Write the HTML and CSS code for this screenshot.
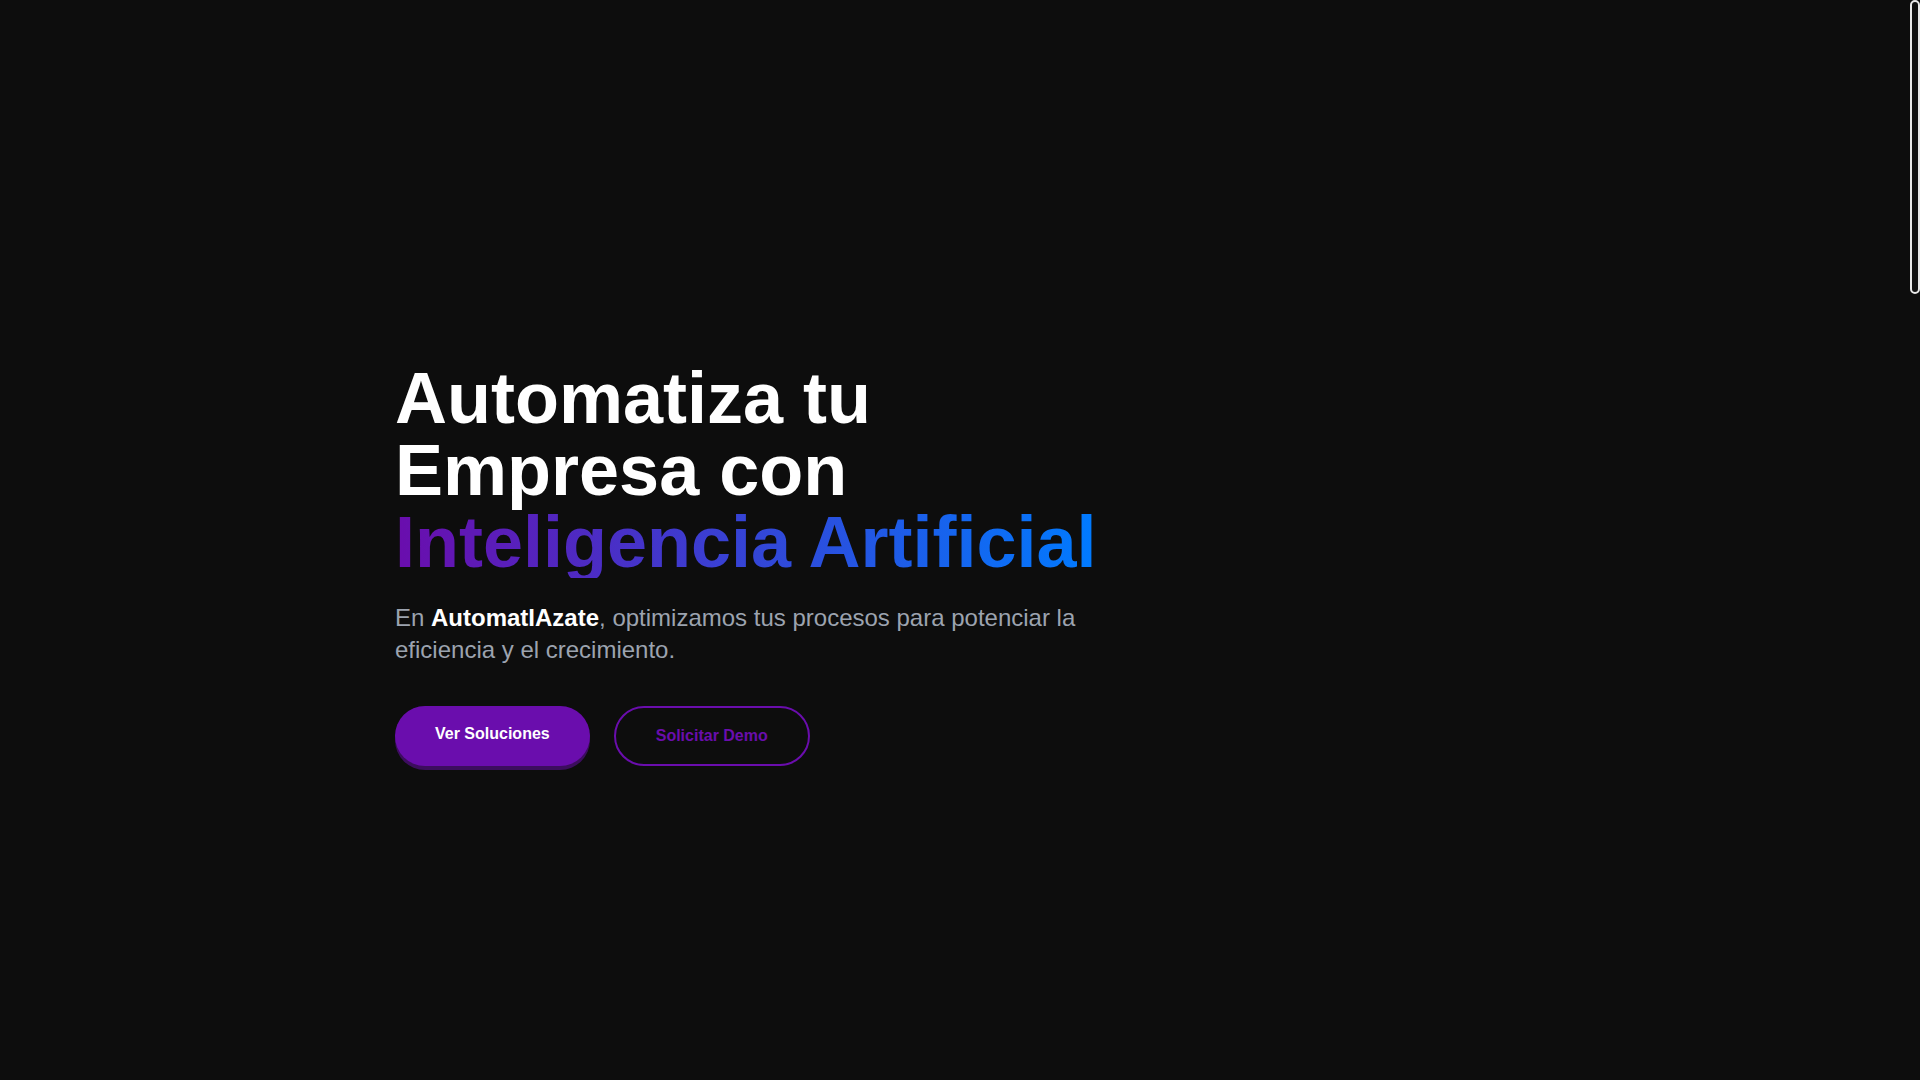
FILE: index.html
```html
<!DOCTYPE html>
<html lang="es">
<head>
<meta charset="utf-8">
<title>AutomatIAzate</title>
<link rel="stylesheet" href="styles.css">
</head>
<body>
<main class="page">
  <section class="hero">
    <div class="container">
      <h1 class="title">Automatiza tu Empresa con <span class="gradient">Inteligencia Artificial</span></h1>
      <p class="lead">En <strong>AutomatIAzate</strong>, optimizamos tus procesos para potenciar la eficiencia y el crecimiento.</p>
      <div class="actions">
        <a class="btn btn-primary" href="#soluciones">Ver Soluciones</a>
        <a class="btn btn-outline" href="#demo">Solicitar Demo</a>
      </div>
    </div>
  </section>
  <section class="rest" id="soluciones"></section>
</main>
<div class="scrollbar" aria-hidden="true"><div class="scrollbar-thumb"></div></div>
</body>
</html>
```
FILE: styles.css
```css
html {
  background: #0d0d0d;
}
body {
  margin: 0;
  background: #0d0d0d;
  font-family: "Liberation Sans", Arial, sans-serif;
  color: #ffffff;
}
.page {
  padding-right: 10px;
}
.hero {
  height: 1080px;
  box-sizing: border-box;
  padding-top: 48px;
  display: flex;
  align-items: center;
}
.container {
  width: 100%;
  max-width: 1152px;
  margin: 0 auto;
  padding: 0 16px;
  box-sizing: border-box;
}
.title {
  max-width: 768px;
  margin: 0 0 24px 0;
  font-size: 72px;
  line-height: 72px;
  font-weight: 700;
  color: #ffffff;
}
.gradient {
  display: inline-block;
  background: linear-gradient(to right, #6a0dad, #007bff);
  -webkit-background-clip: text;
  background-clip: text;
  color: transparent;
}
.lead {
  max-width: 768px;
  margin: 0 0 40px 0;
  font-size: 24px;
  line-height: 32px;
  color: #9ca3af;
}
.lead strong {
  color: #ffffff;
  font-weight: 700;
}
.actions {
  display: flex;
  align-items: flex-start;
  gap: 24px;
}
.btn {
  display: inline-block;
  font-size: 16px;
  line-height: 24px;
  font-weight: 700;
  text-decoration: none;
  border-radius: 9999px;
}
.btn-primary {
  background: #6a0dad;
  color: #ffffff;
  padding: 16px 40px 20px;
  box-shadow: 0 4px 0 #3c0d5e;
}
.btn-outline {
  background: transparent;
  color: #6a0dad;
  border: 2px solid #6a0dad;
  padding: 16px 40px;
}
.rest {
  height: 2890px;
}
.scrollbar {
  position: fixed;
  top: 0;
  right: 0;
  width: 10px;
  height: 100%;
  background: #0d0d0d;
}
.scrollbar-thumb {
  height: 294px;
  box-sizing: border-box;
  background: #111111;
  border: 2px solid #e8e8e8;
  border-radius: 10px;
}
```
